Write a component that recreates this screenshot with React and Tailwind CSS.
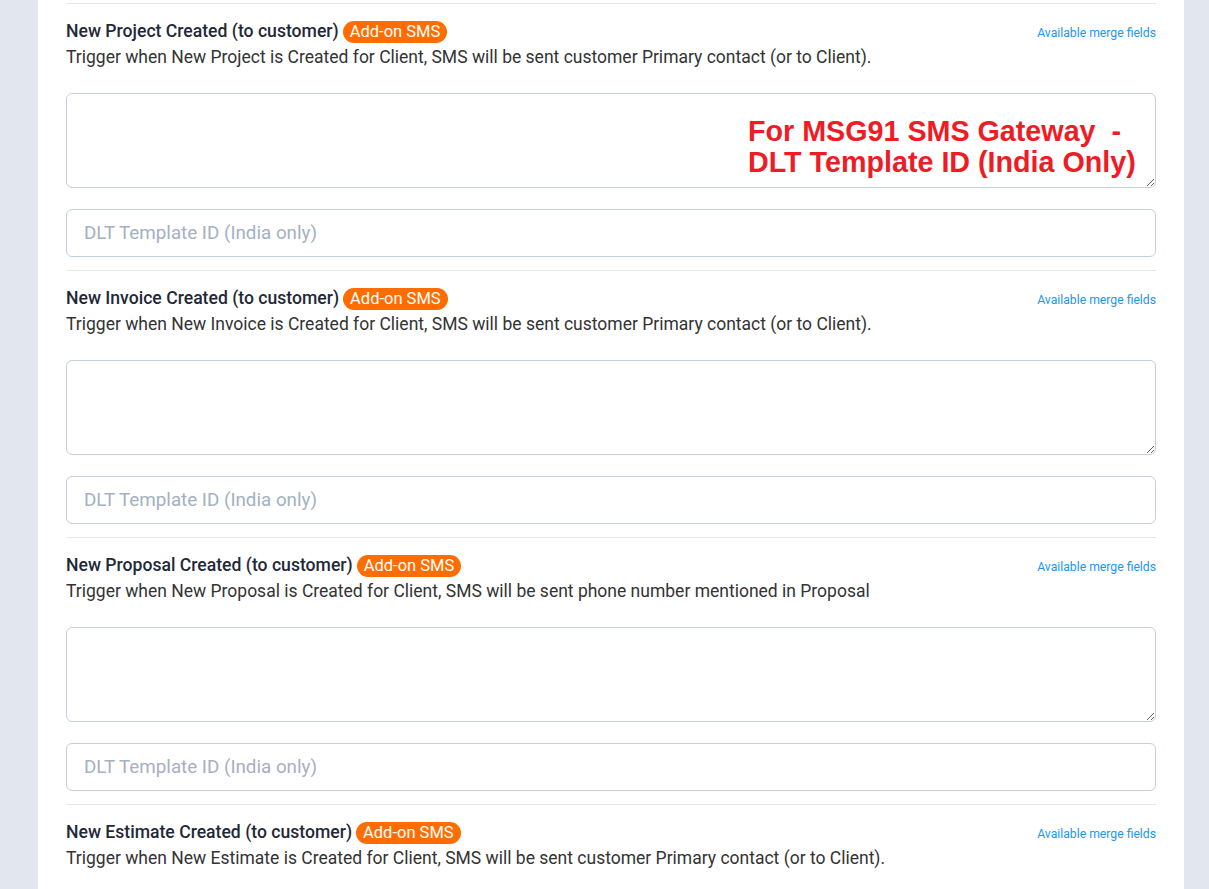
import React from "react";

const sections = [
  {
    title: "New Project Created (to customer)",
    desc: "Trigger when New Project is Created for Client, SMS will be sent customer Primary contact (or to Client).",
    note: true,
  },
  {
    title: "New Invoice Created (to customer)",
    desc: "Trigger when New Invoice is Created for Client, SMS will be sent customer Primary contact (or to Client).",
  },
  {
    title: "New Proposal Created (to customer)",
    desc: "Trigger when New Proposal is Created for Client, SMS will be sent phone number mentioned in Proposal",
  },
  {
    title: "New Estimate Created (to customer)",
    desc: "Trigger when New Estimate is Created for Client, SMS will be sent customer Primary contact (or to Client).",
  },
];

function Section({ s }) {
  return (
    <div className="border-t border-[#e5e7eb] pt-[14px] pb-[13px]">
      <div className="flex items-center justify-between h-[26px]">
        <div className="flex items-center">
          <span className="text-[17.6px] font-medium text-[#1f2937]">{s.title}</span>
          <span className="ml-[4px] mt-[2px] rounded-full bg-[#ff6d00] text-white text-[16.5px] leading-[22px] px-[7px]">
            Add-on SMS
          </span>
        </div>
        <a className="text-[12.2px] text-[#2196f3] mt-[4px]">Available merge fields</a>
      </div>
      <p className="text-[17.5px] leading-[26px] text-[#333]">{s.desc}</p>
      <div className="relative mt-[23px]">
        <textarea className="block w-full h-[95px] rounded-md border border-[#c3cfdb] bg-white outline-none resize-y" />
        {s.note && (
          <div
            className="absolute left-[682px] top-[23px] text-[#ee1c25] font-bold text-[28.7px] leading-[31px] whitespace-pre pointer-events-none"
            style={{ fontFamily: '"Liberation Sans", Arial, sans-serif' }}
          >
            {"For MSG91 SMS Gateway  - \nDLT Template ID (India Only)"}
          </div>
        )}
      </div>
      <input
        className="mt-[21px] block w-full h-[48px] rounded-md border border-[#c3cfdb] px-[17px] text-[18.8px] placeholder:text-[#a3b1c2] outline-none"
        placeholder="DLT Template ID (India only)"
      />
    </div>
  );
}

export default function App() {
  return (
    <div
      className="w-[1209px] h-[889px] overflow-hidden bg-[#e2e7ef]"
      style={{ fontFamily: "Roboto, sans-serif" }}
    >
      <div className="ml-[38px] w-[1146px] h-full bg-white px-[28px] pt-[3px]">
        {sections.map((s, i) => (
          <Section key={i} s={s} />
        ))}
      </div>
    </div>
  );
}
